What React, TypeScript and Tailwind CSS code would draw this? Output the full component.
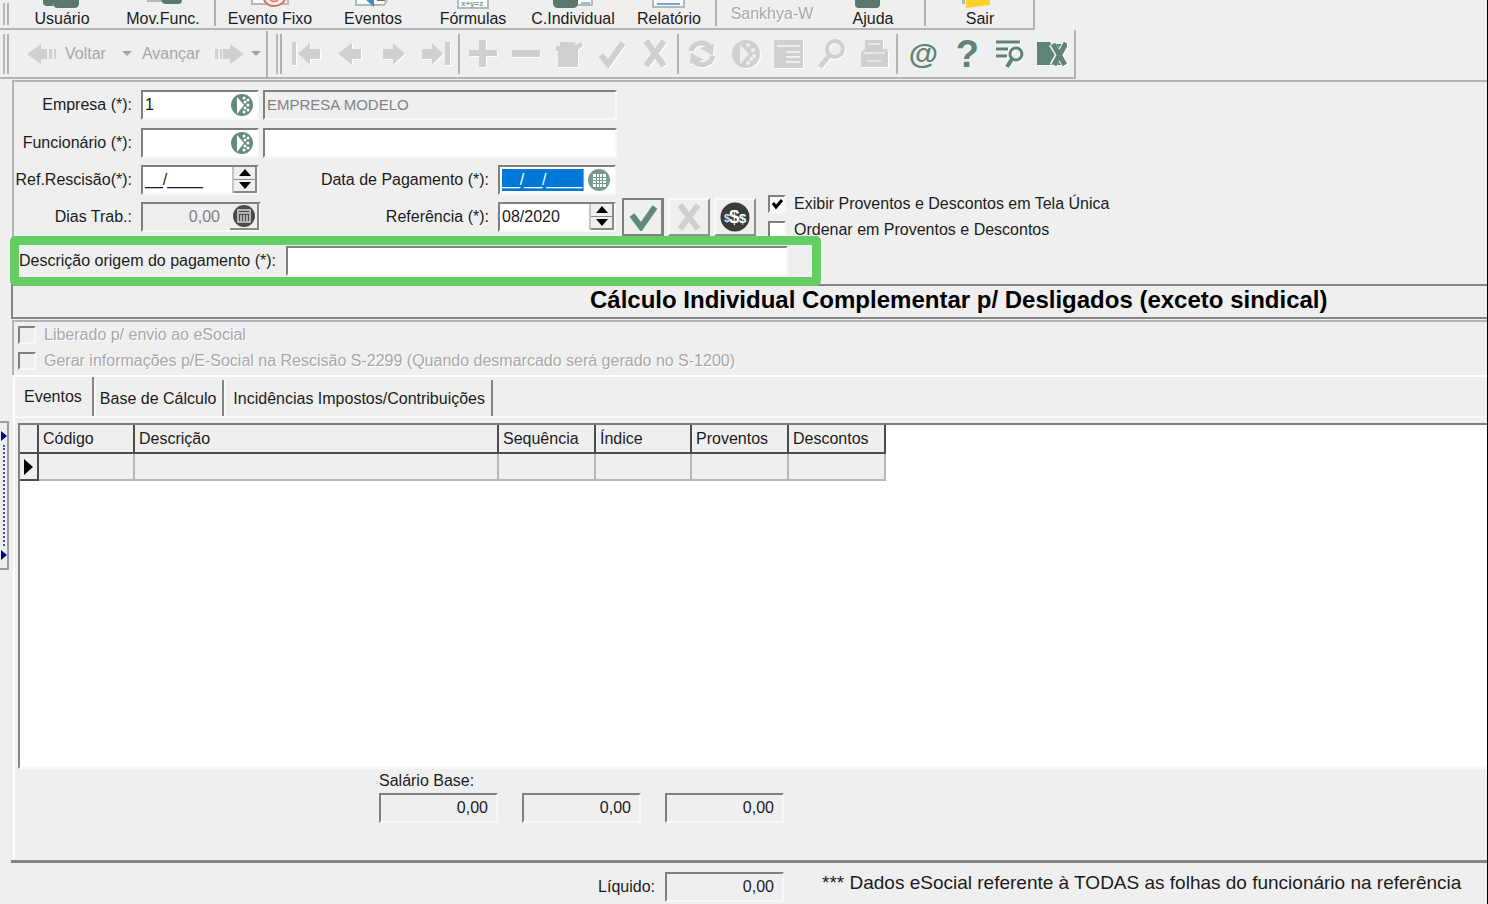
import { useState } from "react"
import type { ReactNode } from "react"
import clsx from "clsx"

const SUNKEN = "border-2 border-t-[#808080] border-l-[#808080] border-r-[#f8f8f8] border-b-[#f8f8f8]"
const DISABLED_TEXT = "text-[#a8a8a8] [text-shadow:1px_1px_0_#fff]"

const Handle = () => (
  <div className="mx-[3px] my-[3px] w-[6px] shrink-0 border-x-2 border-r-[#b0b0b0] border-l-[#b8b8b8]" />
)

const Separator = () => <div className="mx-px my-[3px] w-[2px] shrink-0 bg-[#b4b4b4]" />

/* ---------- main menu ---------- */

const menuIcons: Record<string, ReactNode> = {
  usuario: (
    <>
      <path d="M1 0h10v6H5q-4 0-4-4z" fill="#5a786c" />
      <path d="M11 0h26v3q0 5-5 5H16q-5 0-5-5z" fill="#5a786c" />
    </>
  ),
  mov: (
    <>
      <path d="M4 0h14v2H4z" fill="#b5b9b7" />
      <path d="M18 0h21q0 4-4 4H23q-4 0-5-4z" fill="#5a786c" />
    </>
  ),
  fixo: (
    <>
      <path d="M2 0v4h36V0" fill="#fafafa" stroke="#b0bab6" strokeWidth="2" />
      <path d="M14 0q3 6 10 6t11-6" fill="#f8ecea" stroke="#d9705f" strokeWidth="2" />
      <path d="M20 0q4 3 8 0" fill="none" stroke="#d9705f" strokeWidth="1.5" />
    </>
  ),
  eventos: (
    <>
      <path d="M3 0v5h28l3-5" fill="#fafafa" stroke="#b0bab6" strokeWidth="2" />
      <path d="M13 0h8v7z" fill="#3f8fc4" />
      <path d="M24 0h8" stroke="#5a786c" strokeWidth="2" />
    </>
  ),
  formulas: (
    <>
      <path d="M5 0v8h30V0" fill="#fafafa" stroke="#b0bab6" strokeWidth="2" />
      <text x="8" y="6" fontSize="8" fontWeight="bold" fill="#7fa092">
        x+y=z
      </text>
    </>
  ),
  individual: (
    <>
      <path d="M24 0v5h15V0" fill="#fafafa" stroke="#b0bab6" strokeWidth="2" />
      <path d="M28 3h9" stroke="#7aa7cf" strokeWidth="1.5" />
      <path d="M0 0h25v4q-1 4-5 4H5q-4 0-5-4z" fill="#5a786c" />
    </>
  ),
  relatorio: (
    <>
      <path d="M4 0v7h31V0" fill="#fafafa" stroke="#b0bab6" strokeWidth="2" />
      <path d="M8 4h23" stroke="#7a9fd6" strokeWidth="2" />
    </>
  ),
  sankhya: null,
  ajuda: <path d="M2 0h25v4q0 4-4 4H6q-4 0-4-4z" fill="#5a786c" />,
  sair: (
    <>
      <path d="M2 0h3v4H2z" fill="#b5b5b5" />
      <path d="M6 0h24v5L6 8z" fill="#fcd12a" />
    </>
  ),
}

type MenuItem = { label: string; icon: string; width: string; disabled?: boolean }

const menuGroups: MenuItem[][] = [
  [
    { label: "Usuário", icon: "usuario", width: "w-[100px]" },
    { label: "Mov.Func.", icon: "mov", width: "w-[102px]" },
  ],
  [
    { label: "Evento Fixo", icon: "fixo", width: "w-[106px]" },
    { label: "Eventos", icon: "eventos", width: "w-[100px]" },
    { label: "Fórmulas", icon: "formulas", width: "w-[100px]" },
    { label: "C.Individual", icon: "individual", width: "w-[100px]" },
    { label: "Relatório", icon: "relatorio", width: "w-[92px]" },
  ],
  [
    { label: "Sankhya-W", icon: "sankhya", width: "w-[108px]", disabled: true },
    { label: "Ajuda", icon: "ajuda", width: "w-[94px]" },
  ],
  [{ label: "Sair", icon: "sair", width: "w-[106px]" }],
]

const MainMenu = () => (
  <nav className="flex h-[30px] w-fit border-r-2 border-b-2 border-[#b4b4b4]">
    <Handle />
    {menuGroups.map((group, i) => (
      <div key={i} className="flex">
        {i > 0 && <div className="mr-px mb-[2px] w-[2px] bg-[#b0b0b0]" />}
        {group.map((item) => (
          <button
            key={item.label}
            disabled={item.disabled}
            className={clsx(
              "flex flex-col items-center leading-5",
              item.width,
              item.disabled && DISABLED_TEXT,
              item.disabled && "pt-1",
            )}
          >
            {!item.disabled && (
              <svg width="40" height="9" viewBox="0 0 40 9" className="shrink-0">
                {menuIcons[item.icon]}
              </svg>
            )}
            {item.label}
          </button>
        ))}
        {i === 2 && <div className="w-1" />}
      </div>
    ))}
  </nav>
)

/* ---------- toolbar ---------- */

const ToolIcon = ({ children }: { children: ReactNode }) => (
  <svg width="30" height="30" viewBox="0 0 30 30" className="drop-shadow-[1px_1px_0_#fff]">
    {children}
  </svg>
)

const G = "#cfd0d2"
const GREEN = "#5f8376"

const navTools = [
  { name: "Primeiro", icon: <path d="M0 3h4v23H0zM6 14.500L18 4v6h10v10H18v6z" fill={G} /> },
  { name: "Anterior", icon: <path d="M3 14.500L17 4v6h9v10h-9v6z" fill={G} /> },
  { name: "Próximo", icon: <path d="M27 14.500L15 4v6H5v10h10v6z" fill={G} /> },
  { name: "Último", icon: <path d="M22 14.500L11 4v6H1v10h10v6zM24 3h5v23h-5z" fill={G} /> },
]

const editTools = [
  { name: "Incluir", icon: <path d="M11 1h7v10h11v6H18v11h-7V17H1v-6h10z" fill={G} /> },
  { name: "Excluir", icon: <path d="M1 11h28v7H1z" fill={G} /> },
  { name: "Editar", icon: <path d="M2 7h4V3h15l1 3 5-3 2 4-5 4v17H4V12H2z" fill={G} /> },
  { name: "Confirmar", icon: <path d="M4 16l7 9L26 4" fill="none" stroke={G} strokeWidth="6" /> },
  { name: "Cancelar", icon: <path d="M6 2l18 25M24 2L6 27" fill="none" stroke={G} strokeWidth="6" /> },
]

const viewTools = [
  {
    name: "Atualizar",
    icon: (
      <>
        <path d="M4 12A11 11 0 0 1 23 8M26 17A11 11 0 0 1 7 22" fill="none" stroke={G} strokeWidth="5" />
        <path d="M13 9l14-4-1 12zM3 25l1-11 13 7z" fill={G} />
      </>
    ),
  },
  {
    name: "Pesquisar",
    icon: (
      <>
        <circle cx="16" cy="15" r="14" fill={G} />
        <path d="M10 6l9 9-9 10z" fill="#efefef" />
        {[
          [18, 6],
          [23, 11],
          [24, 17],
          [18, 24],
          [21, 20],
        ].map(([x, y]) => (
          <circle key={y} cx={x} cy={y} r="2" fill="#efefef" />
        ))}
      </>
    ),
  },
  {
    name: "Formulário",
    icon: (
      <>
        <path d="M1 1h29v28H1z" fill={G} />
        <path d="M4 7h23M13 13h14M13 18h14M13 23h14" stroke="#efefef" strokeWidth="2" />
      </>
    ),
  },
  {
    name: "Localizar",
    icon: (
      <>
        <circle cx="19" cy="10" r="8" fill="none" stroke={G} strokeWidth="4" />
        <path d="M13 17L4 28" stroke={G} strokeWidth="5" />
      </>
    ),
  },
  {
    name: "Imprimir",
    icon: (
      <>
        <path d="M6 1h18v9h4l1 3v15H2V13l4-3z" fill={G} />
        <path d="M9 5h12M5 14h21M8 22h14" stroke="#efefef" strokeWidth="1.500" />
      </>
    ),
  },
]

const ToolGroup = ({ tools }: { tools: { name: string; icon: ReactNode }[] }) => (
  <>
    {tools.map((tool) => (
      <button key={tool.name} aria-label={tool.name} disabled className="flex w-[43px] items-center justify-center">
        <ToolIcon>{tool.icon}</ToolIcon>
      </button>
    ))}
  </>
)

const Caret = () => (
  <svg width="10" height="6" viewBox="0 0 10 6">
    <path d="M0 0h10L5 5z" fill="#a3a3a3" />
  </svg>
)

const Toolbar = () => (
  <div className="flex h-[49px] w-fit border-r-2 border-b-2 border-[#b4b4b4] pt-px">
    <Handle />
    <div className={clsx("flex items-center border-r-2 border-[#b4b4b4] pr-[5px] pl-[15px]", DISABLED_TEXT)}>
      <button disabled className="flex items-center gap-2">
        <svg width="30" height="22" viewBox="0 0 30 22">
          <path d="M0 11L14 1v5h6v10h-6v5zM22 6h3v10h-3zM27 6h2v10h-2z" fill={G} />
        </svg>
        Voltar
      </button>
      <button disabled aria-label="Histórico anterior" className="mr-[10px] ml-4">
        <Caret />
      </button>
      <button disabled className="flex items-center gap-[15px]">
        Avançar
        <svg width="30" height="22" viewBox="0 0 30 22">
          <path d="M29 11L15 1v5H8v10h7v5zM5 6h2v10H5zM0 6h3v10H0z" fill={G} />
        </svg>
      </button>
      <button disabled aria-label="Histórico seguinte" className="ml-[6px]">
        <Caret />
      </button>
    </div>
    <div className="w-[5px]" />
    <Handle />
    <ToolGroup tools={navTools} />
    <Separator />
    <ToolGroup tools={editTools} />
    <Separator />
    <ToolGroup tools={viewTools} />
    <Separator />
    <button aria-label="E-mail" className="w-[48px] text-center text-[30px] leading-[46px] font-bold text-[#5f8376]">
      @
    </button>
    <button aria-label="Ajuda" className="w-[40px] text-center text-[38px] leading-[46px] font-bold text-[#5f8376]">
      ?
    </button>
    <button aria-label="Filtro" className="flex w-[44px] items-center justify-center">
      <ToolIcon>
        <path d="M2 3h24M2 10h12M2 17h11" stroke={GREEN} strokeWidth="3" />
        <circle cx="22" cy="15" r="6" fill="none" stroke={GREEN} strokeWidth="3" />
        <path d="M18 20l-5 8" stroke={GREEN} strokeWidth="4" />
      </ToolIcon>
    </button>
    <button aria-label="Fechar" className="mr-px flex w-[42px] items-center justify-center">
      <ToolIcon>
        <path d="M0 3h13l1 2h12v21H0z" fill={GREEN} />
        <path d="M14 6l5 9-6 11" fill="none" stroke="#efefef" />
        <path d="M15 5l13 21M29 4L16 26" stroke="#efefef" strokeWidth="7" />
        <path d="M16 5l12 21M29 4L17 26" stroke={GREEN} strokeWidth="5" />
      </ToolIcon>
    </button>
  </div>
)

/* ---------- form ---------- */

const LookupIcon = () => (
  <svg width="22" height="22" viewBox="0 0 22 22">
    <circle cx="11" cy="11" r="11" fill="#658a7e" />
    <path d="M6 3l7 8-7 9z" fill="#fff" />
    {[
      [13, 4],
      [17, 6],
      [17, 11],
      [13, 18],
      [17, 16],
      [14, 14],
      [14, 8],
    ].map(([x, y]) => (
      <circle key={`${x}-${y}`} cx={x} cy={y} r="1.500" fill="#fff" />
    ))}
  </svg>
)

const CalendarIcon = () => (
  <svg width="22" height="22" viewBox="0 0 22 22">
    <circle cx="11" cy="11" r="11" fill="#7b9a8f" />
    <path d="M5 5h13v13H5z" fill="#fff" />
    <path d="M5 8.500h13M5 11.500h13M5 14.500h13M8.500 5v13M11.500 5v13M14.500 5v13" stroke="#7b9a8f" />
  </svg>
)

const CalculatorIcon = () => (
  <svg width="22" height="22" viewBox="0 0 22 22">
    <circle cx="11" cy="11" r="11" fill="#4a4a4a" />
    <path d="M5 5h12v12H5z" fill="none" stroke="#d8d8d8" strokeWidth="1.500" />
    <path d="M6 8h10M8 10v6M11 10v6M14 10v6" stroke="#d8d8d8" strokeWidth="1.500" />
  </svg>
)

const Spinner = ({ name }: { name: string }) => (
  <div className="ml-auto flex flex-col border-l-2 border-[#c4c4c4]">
    <button
      aria-label={`Aumentar ${name}`}
      className="flex w-[23px] flex-1 items-center justify-center border-r-2 border-b border-[#8a8a8a] bg-[#efefef]"
    >
      <svg width="12" height="7" viewBox="0 0 12 7">
        <path d="M6 0l6 7H0z" />
      </svg>
    </button>
    <button
      aria-label={`Diminuir ${name}`}
      className="flex w-[23px] flex-1 items-center justify-center border-r-2 border-b-2 border-[#8a8a8a] bg-[#efefef]"
    >
      <svg width="12" height="7" viewBox="0 0 12 7">
        <path d="M0 0h12L6 7z" />
      </svg>
    </button>
  </div>
)

const FieldLabel = ({ id, className, children }: { id: string; className: string; children: ReactNode }) => (
  <label htmlFor={id} className={clsx("shrink-0 text-right whitespace-nowrap", className)}>
    {children}
  </label>
)

const Field = ({ className, children }: { className: string; children: ReactNode }) => (
  <div className={clsx("flex h-[30px] shrink-0", SUNKEN, className)}>{children}</div>
)

const Check = ({
  label,
  checked = false,
  disabled,
  onChange,
}: {
  label: string
  checked?: boolean
  disabled?: boolean
  onChange?: () => void
}) => (
  <label className={clsx("flex h-[18px] items-center gap-2 whitespace-nowrap", disabled && DISABLED_TEXT)}>
    <span className="relative size-[18px]">
      <input
        type="checkbox"
        checked={checked}
        disabled={disabled}
        readOnly={!onChange}
        onChange={onChange}
        className={clsx("block size-[18px] appearance-none", SUNKEN, disabled ? "bg-[#efefef]" : "bg-white")}
      />
      {checked && (
        <svg viewBox="0 0 18 18" className="pointer-events-none absolute inset-0">
          <path d="M5 8l3 4 6-7" fill="none" stroke="#000" strokeWidth="3" />
        </svg>
      )}
    </span>
    {label}
  </label>
)

const INPUT = "min-w-0 bg-transparent pl-[2px] outline-none"
const RAISED =
  "flex h-[38px] items-center justify-center border-2 border-t-[#fafafa] border-l-[#fafafa] border-r-[#909090] border-b-[#909090]"

const FormPanel = () => {
  const [singleScreen, setSingleScreen] = useState(true)
  const [ordered, setOrdered] = useState(false)

  return (
    <section className="ml-px border-t-2 border-l-2 border-[#b4b4b4]">
      <div className="flex pt-2">
        <div className="flex flex-col gap-[7px]">
          <div className="mb-px flex items-center">
            <FieldLabel id="empresa" className="w-[118px]">
              Empresa (*):
            </FieldLabel>
            <Field className="mr-1 ml-[9px] w-[118px] items-center bg-white">
              <input id="empresa" defaultValue="1" className={clsx(INPUT, "flex-1")} />
              <button aria-label="Pesquisar empresa" className="mr-1">
                <LookupIcon />
              </button>
            </Field>
            <Field className="w-[354px]">
              <input
                aria-label="Nome da empresa"
                disabled
                value="EMPRESA MODELO"
                className={clsx(INPUT, "flex-1 text-[15px] text-[#828282]")}
              />
            </Field>
          </div>
          <div className="flex items-center">
            <FieldLabel id="funcionario" className="w-[118px]">
              Funcionário (*):
            </FieldLabel>
            <Field className="mr-1 ml-[9px] w-[118px] items-center bg-white">
              <input id="funcionario" className={clsx(INPUT, "flex-1")} />
              <button aria-label="Pesquisar funcionário" className="mr-1">
                <LookupIcon />
              </button>
            </Field>
            <Field className="w-[354px] bg-white">
              <input aria-label="Nome do funcionário" className={clsx(INPUT, "flex-1")} />
            </Field>
          </div>
          <div className="flex items-center">
            <FieldLabel id="rescisao" className="w-[118px]">
              Ref.Rescisão(*):
            </FieldLabel>
            <Field className="ml-[9px] w-[118px] bg-white">
              <input id="rescisao" defaultValue="__/____" className={clsx(INPUT, "flex-1")} />
              <Spinner name="Ref.Rescisão" />
            </Field>
            <FieldLabel id="pagamento" className="w-[230px]">
              Data de Pagamento (*):
            </FieldLabel>
            <Field className="ml-[9px] w-[118px] items-center justify-between bg-white">
              <input
                id="pagamento"
                defaultValue="__/__/____"
                className="ml-[2px] h-[22px] w-[82px] border-r border-[#e08a3c] bg-[#0078d7] text-white outline-none"
              />
              <button aria-label="Abrir calendário" className="mr-1">
                <CalendarIcon />
              </button>
            </Field>
          </div>
          <div className="flex items-center">
            <FieldLabel id="dias" className="w-[118px]">
              Dias Trab.:
            </FieldLabel>
            <Field className="ml-[9px] w-[120px]">
              <input
                id="dias"
                disabled
                value="0,00"
                className={clsx(INPUT, "flex-1 pr-[10px] text-right text-[#828282]")}
              />
              <button
                aria-label="Calculadora"
                className="flex w-[29px] items-center justify-center border-r-2 border-b-2 border-[#8a8a8a]"
              >
                <CalculatorIcon />
              </button>
            </Field>
            <FieldLabel id="referencia" className="w-[228px]">
              Referência (*):
            </FieldLabel>
            <Field className="ml-[9px] w-[118px] bg-white">
              <input id="referencia" defaultValue="08/2020" className={clsx(INPUT, "flex-1")} />
              <Spinner name="Referência" />
            </Field>
          </div>
        </div>

        <div className="mt-[108px] ml-[5px] flex gap-1">
          <button
            aria-label="Confirmar"
            className="flex h-[38px] w-[42px] items-center justify-center border-2 border-r-[3px] border-[#808080]"
          >
            <svg width="28" height="28" viewBox="0 0 28 28">
              <path d="M3 12l9 12L26 4" fill="none" stroke="#5f8a7c" strokeWidth="6" />
            </svg>
          </button>
          <button aria-label="Cancelar" disabled className={clsx(RAISED, "w-[42px]")}>
            <svg width="28" height="28" viewBox="0 0 28 28">
              <path d="M5 2l18 24M23 2L5 26" stroke={G} strokeWidth="6" />
            </svg>
          </button>
          <button aria-label="Calcular valores" className={clsx(RAISED, "w-[42px]")}>
            <svg width="30" height="30" viewBox="0 0 30 30">
              <circle cx="15" cy="15" r="14.500" fill="#3b3b3b" />
              <text x="4" y="20" fontSize="11" fontWeight="bold" fill="#ddd">
                $
              </text>
              <text x="9" y="21" fontSize="19" fontWeight="bold" fill="#fff">
                $
              </text>
              <text x="19" y="21" fontSize="13" fontWeight="bold" fill="#fff">
                $
              </text>
            </svg>
          </button>
        </div>

        <div className="mt-[105px] ml-3 flex flex-col gap-2">
          <Check
            label="Exibir Proventos e Descontos em Tela Única"
            checked={singleScreen}
            onChange={() => setSingleScreen(!singleScreen)}
          />
          <Check
            label="Ordenar em Proventos e Descontos"
            checked={ordered}
            onChange={() => setOrdered(!ordered)}
          />
        </div>
      </div>

      {/* highlighted field, its frame sits on top of its neighbours */}
      <div className="relative z-10 -mt-[3px] -ml-1 flex h-[50px] w-[811px] items-center rounded-[5px] border-[9px] border-[#66cc66] bg-[#efefef]">
        <FieldLabel id="origem" className="w-[257px]">
          Descrição origem do pagamento (*):
        </FieldLabel>
        <Field className="ml-[10px] w-[502px] bg-white">
          <input id="origem" className={clsx(INPUT, "flex-1")} />
        </Field>
      </div>
    </section>
  )
}

/* ---------- events ---------- */

const columns = [
  { name: "Código", width: "w-[96px]" },
  { name: "Descrição", width: "w-[364px]" },
  { name: "Sequência", width: "w-[97px]" },
  { name: "Índice", width: "w-[96px]" },
  { name: "Proventos", width: "w-[97px]" },
  { name: "Descontos", width: "w-[97px]" },
]

const tabs = ["Eventos", "Base de Cálculo", "Incidências Impostos/Contribuições"]

const EventsPanel = () => {
  const [active, setActive] = useState("Eventos")

  return (
    <section className="ml-[2px] flex flex-1 flex-col border-t-2 border-l-2 border-white">
      <div role="tablist" className="flex h-[41px] items-end border-b-2 border-[#f8f8f8]">
        {tabs.map((tab) => (
          <button
            key={tab}
            role="tab"
            aria-selected={tab === active}
            onClick={() => setActive(tab)}
            className={clsx(
              "border-r-2 border-r-[#858585] whitespace-nowrap",
              tab === active ? "h-[39px] pr-[10px] pl-[9px]" : "h-[36px] border-l-2 border-l-[#f8f8f8] pt-[2px]",
              tab === tabs[1] && "pr-[6px] pl-1",
              tab === tabs[2] && "pr-[6px] pl-[7px]",
            )}
          >
            {tab}
          </button>
        ))}
      </div>

      <div className="mt-[5px] ml-[3px] min-h-[120px] flex-1 border-t-2 border-b-2 border-l-2 border-t-[#7c7c7c] border-b-[#f8f8f8] border-l-[#858585] bg-white">
        <table className="table-fixed border-collapse bg-[#efefef]">
          <thead>
            <tr className="h-[28px]">
              <th aria-label="Linha atual" className="w-[18px] border-r-2 border-b-2 border-[#4c4c4c]" />
              {columns.map((col) => (
                <th
                  key={col.name}
                  className={clsx("border-r-2 border-b-2 border-[#4c4c4c] pl-1 text-left font-normal", col.width)}
                >
                  {col.name}
                </th>
              ))}
            </tr>
          </thead>
          <tbody>
            <tr className="h-[27px]">
              <td className="border-r-2 border-b-2 border-[#4c4c4c]">
                <svg width="10" height="16" viewBox="0 0 10 16" className="ml-1">
                  <path d="M0 0l9 8-9 8z" />
                </svg>
              </td>
              {columns.map((col) => (
                <td key={col.name} className="border-r-2 border-b-2 border-[#b8b8b8]" />
              ))}
            </tr>
          </tbody>
        </table>
      </div>

      <div className="flex h-[91px] gap-6 pl-[364px]">
        <div>
          <label htmlFor="salario" className="block leading-6">
            Salário Base:
          </label>
          <Total id="salario" />
        </div>
        <div className="pt-6">
          <Total label="Total de proventos" />
        </div>
        <div className="pt-6">
          <Total label="Total de descontos" />
        </div>
      </div>
    </section>
  )
}

const Total = ({ id, label }: { id?: string; label?: string }) => (
  <Field className="w-[119px]">
    <input id={id} aria-label={label} readOnly value="0,00" className={clsx(INPUT, "flex-1 pr-2 text-right")} />
  </Field>
)

const SideSplitter = () => (
  <div className="mt-[341px] flex h-[149px] w-[9px] flex-col items-center justify-between border-y-2 border-r-2 border-[#9c9c9c] py-2">
    <svg width="6" height="10" viewBox="0 0 6 10">
      <path d="M0 0l6 5-6 5z" fill="#00008b" />
    </svg>
    <div className="my-1 flex-1 border-l-2 border-dotted border-[#4a4ab0]" />
    <svg width="6" height="10" viewBox="0 0 6 10">
      <path d="M0 0l6 5-6 5z" fill="#00008b" />
    </svg>
  </div>
)

export default function App() {
  return (
    <div className="flex min-h-screen flex-col overflow-x-hidden border-r border-black bg-[#efefef] font-['Liberation_Sans',Arial,sans-serif] text-[16px] leading-5 text-[#1c1c1c]">
      <MainMenu />
      <Toolbar />

      <main className="flex flex-1 pt-px">
        <div className="w-[11px] shrink-0">
          <SideSplitter />
        </div>
        <div className="flex min-w-0 flex-1 flex-col">
          <FormPanel />
          <h1 className="-mt-[2px] h-[35px] overflow-hidden border-y-2 border-l-2 border-[#858585] pl-[577px] text-[24px] leading-[28px] font-bold whitespace-nowrap text-black">
            Cálculo Individual Complementar p/ Desligados (exceto sindical)
          </h1>
          <div className="mt-px ml-px flex h-[55px] flex-col gap-2 border-t-2 border-l-2 border-[#b4b4b4] pt-1 pl-[4px]">
            <Check label="Liberado p/ envio ao eSocial" disabled />
            <Check
              label="Gerar informações p/E-Social na Rescisão S-2299 (Quando desmarcado será gerado no S-1200)"
              disabled
            />
          </div>
          <EventsPanel />
          <footer className="flex h-[44px] items-center border-t-[3px] border-[#858585] pt-[6px]">
            <FieldLabel id="liquido" className="w-[644px]">
              Líquido:
            </FieldLabel>
            <div className="ml-[10px]">
              <Total id="liquido" />
            </div>
            <p className="ml-[38px] pb-2 text-[19px] whitespace-nowrap">
              *** Dados eSocial referente à TODAS as folhas do funcionário na referência
            </p>
          </footer>
        </div>
      </main>
    </div>
  )
}
